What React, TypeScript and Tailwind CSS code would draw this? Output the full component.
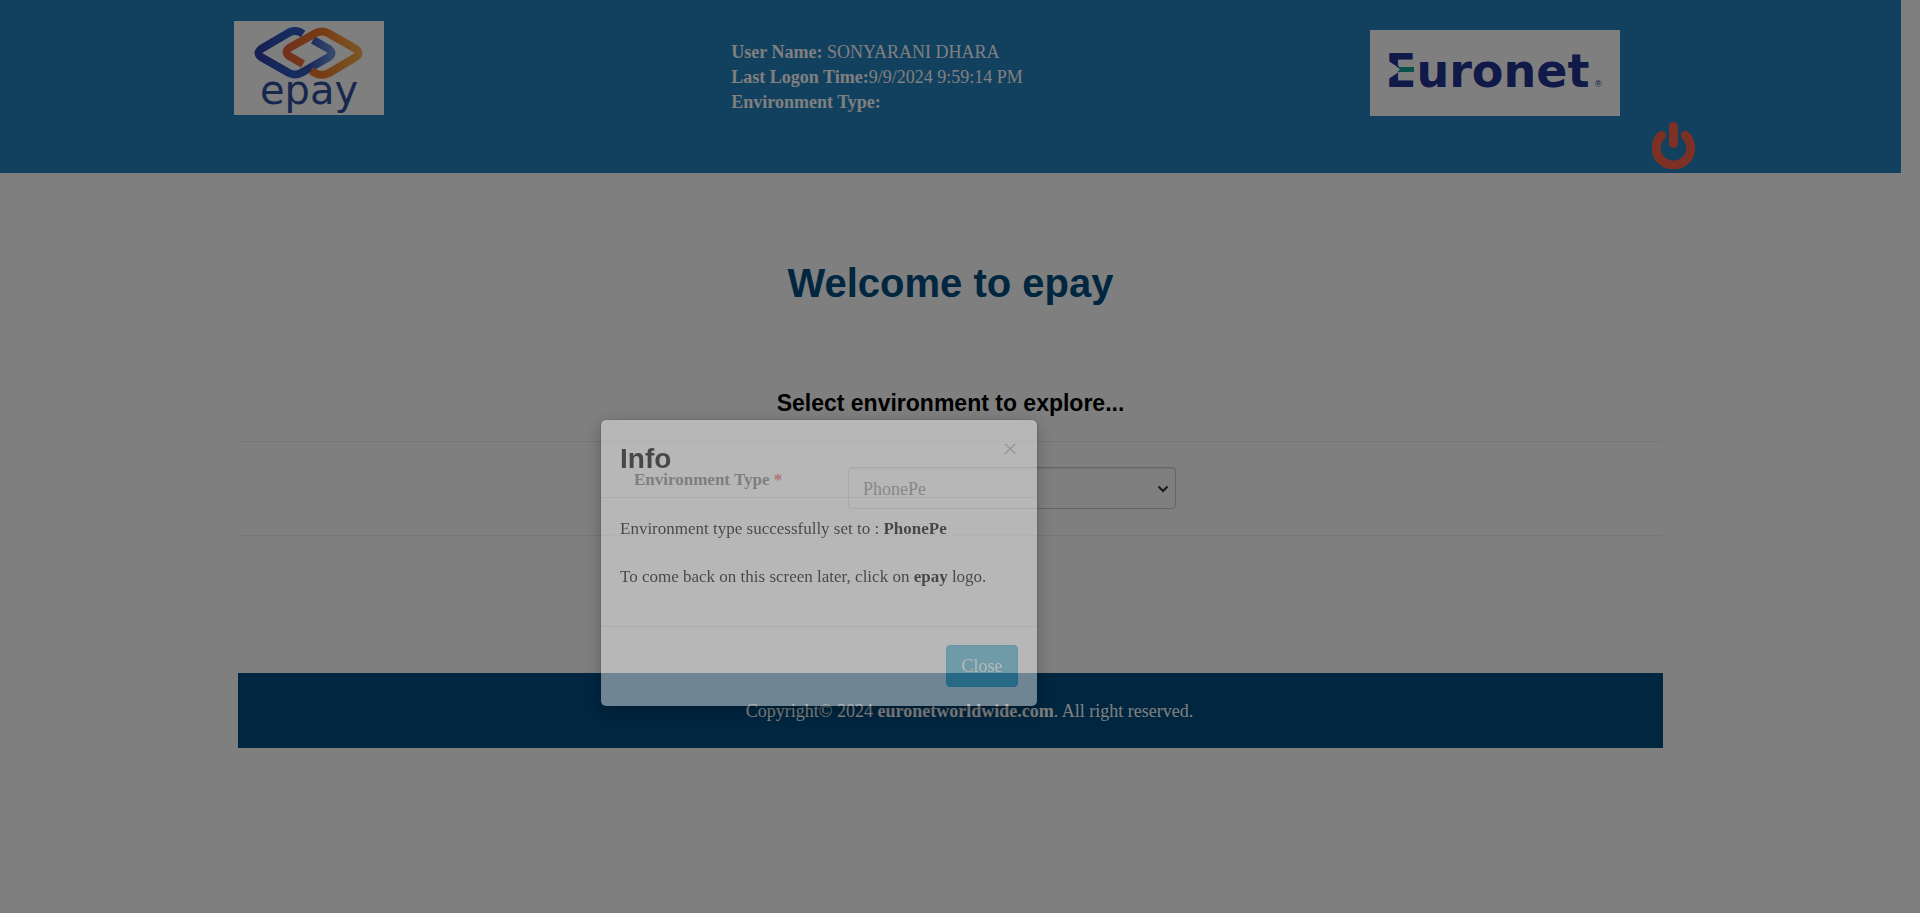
import { useState } from "react";

function EpayLogo() {
  return (
    <svg viewBox="0 0 150 94" className="h-[94px] w-[150px] bg-white" role="img" aria-label="epay">
      <defs>
        <linearGradient id="epay-blue" x1="0" y1="0" x2="1" y2="0">
          <stop offset="0" stopColor="#3040a8" />
          <stop offset="0.45" stopColor="#2c5cc0" />
          <stop offset="0.7" stopColor="#3454b4" />
          <stop offset="1" stopColor="#6c90dc" />
        </linearGradient>
        <linearGradient id="epay-orange" x1="0" y1="0" x2="1" y2="0">
          <stop offset="0" stopColor="#e8643c" />
          <stop offset="0.5" stopColor="#ee7828" />
          <stop offset="1" stopColor="#f8ac48" />
        </linearGradient>
      </defs>
      <g fill="none" strokeWidth="8" strokeLinejoin="round">
        <path d="M69 13 L66 11 Q61 9 56 11 L27 28 Q22 32 27 36 L55 52 Q61 55 67 52 L95 36 Q100 32 95 28 L79 19" stroke="url(#epay-blue)" />
        <path d="M69 43 L55 35 Q50 31 55 27 L82 12 Q88 9 94 12 L122 28 Q127 32 122 36 L95 52 Q89 55 83 53 L77 50" stroke="url(#epay-orange)" />
      </g>
      <text x="75" y="83" textAnchor="middle" fontSize="40" fill="#2f4f9c" className="font-['DejaVu_Sans']">
        epay
      </text>
    </svg>
  );
}

function EuronetLogo() {
  return (
    <svg viewBox="0 0 250 86" className="h-[86px] w-[250px] bg-white" role="img" aria-label="Euronet">
      <text x="15" y="57" fontSize="46" fontWeight="700" fill="#203290" className="font-['DejaVu_Sans']">
        Euronet
      </text>
      <path d="M17 30 L29 38 V30 H47 V50 H29 V42 L17 50 Z" fill="#fff" />
      <path d="M27 37 H44 V42 H27 L30 39.500 Z" fill="#12a594" />
      <text x="225" y="57" fontSize="9" fill="#203290" className="font-['Liberation_Sans']">
        ®
      </text>
    </svg>
  );
}

function PowerIcon() {
  return (
    <svg viewBox="0 0 43 47" className="h-[47px] w-[43px]" fill="none" stroke="#fc6148" strokeLinecap="round" strokeWidth="9" aria-hidden="true">
      <path d="M9.500 13.500 A17.250 17.250 0 1 0 33.500 13.500" />
      <path d="M21.500 4.500 V21.500" />
    </svg>
  );
}

function InfoDialog({ onClose }: { onClose: () => void }) {
  return (
    <>
      <div className="fixed inset-0 bg-black/50" />
      <div
        role="dialog"
        aria-modal="true"
        aria-labelledby="info-title"
        className="absolute top-[419px] left-[600px] w-[438px] rounded-md border border-black/20 bg-white bg-clip-padding text-black opacity-44 shadow-[0_5px_15px_rgba(0,0,0,0.5)]"
      >
        <div className="flex items-start justify-between border-b border-[#e5e5e5] px-[19px] pt-[19px] pb-[18px]">
          <h2 id="info-title" className="font-['Liberation_Sans',sans-serif] text-[28px] leading-10 font-bold">
            Info
          </h2>
          <button type="button" aria-label="Close dialog" onClick={onClose} className="text-[28px] leading-5 opacity-30">
            ×
          </button>
        </div>
        <div className="px-[19px] pt-[19px] pb-[37px] text-[17px] leading-6">
          <p>
            Environment type successfully set to : <b>PhonePe</b>
          </p>
          <p className="mt-6">
            To come back on this screen later, click on <b>epay</b> logo.
          </p>
        </div>
        <div className="flex justify-end border-t border-[#e5e5e5] px-[19px] pt-[18px] pb-[19px]">
          <button type="button" onClick={onClose} className="h-[42px] w-[72px] rounded border border-[#46b8da] bg-[#5bc0de] text-lg text-white">
            Close
          </button>
        </div>
      </div>
    </>
  );
}

export default function App() {
  const [open, setOpen] = useState(true);
  const [environment, setEnvironment] = useState("PhonePe");

  return (
    <div className="min-h-screen bg-white pr-[19px] font-['Liberation_Serif',serif] text-lg text-[#333]">
      <header className="flex items-start justify-between bg-[#2480be] pr-[206px] pb-1 pl-[234px] text-white">
        <a href="#home" className="mt-[21px]">
          <EpayLogo />
        </a>
        <div className="mt-10 leading-[25px]">
          <p>
            <b>User Name:</b> SONYARANI DHARA
          </p>
          <p>
            <b>Last Logon Time:</b>9/9/2024 9:59:14 PM
          </p>
          <p>
            <b>Environment Type:</b>
          </p>
        </div>
        <div className="flex gap-8">
          <div className="mt-[30px]">
            <EuronetLogo />
          </div>
          <button type="button" aria-label="Log out" className="mt-[122px]">
            <PowerIcon />
          </button>
        </div>
      </header>

      <main className="mx-auto w-3/4">
        <h1 className="pt-[86px] text-center font-['Liberation_Sans',sans-serif] text-[40px] leading-[48px] font-bold text-[#004c80]">
          Welcome to epay
        </h1>
        <h2 className="mt-[82px] text-center font-['Liberation_Sans',sans-serif] text-[23px] leading-7 font-bold text-black">
          Select environment to explore...
        </h2>
        <div className="mt-6 flex items-start justify-center border-y border-[#eee] pt-[25px] pr-[91px] pb-[26px]">
          <label htmlFor="environment" className="w-[214px] pt-px text-[17px] leading-6 font-bold">
            Environment Type <span className="text-red-600">*</span>
          </label>
          <div className="relative">
            <select
              id="environment"
              value={environment}
              onChange={(event) => setEnvironment(event.target.value)}
              className="block h-[42px] w-[328px] appearance-none rounded border border-[#ccc] bg-white px-[14px] pt-px text-lg text-[#555] shadow-[inset_0_1px_1px_rgba(0,0,0,0.08)]"
            >
              <option>PhonePe</option>
            </select>
            <svg viewBox="0 0 12 8" className="pointer-events-none absolute top-[18px] right-[7px] h-2 w-3" fill="none" stroke="#333" strokeWidth="2" aria-hidden="true">
              <path d="M1.500 1.500 L6 6 L10.500 1.500" />
            </svg>
          </div>
        </div>
        <footer className="mt-[137px] bg-[#004c80] pt-[25px] pb-[23px] pl-[38px] text-center leading-[27px] text-white">
          Copyright© 2024 <b>euronetworldwide.com</b>. All right reserved.
        </footer>
      </main>

      {open && <InfoDialog onClose={() => setOpen(false)} />}
    </div>
  );
}
